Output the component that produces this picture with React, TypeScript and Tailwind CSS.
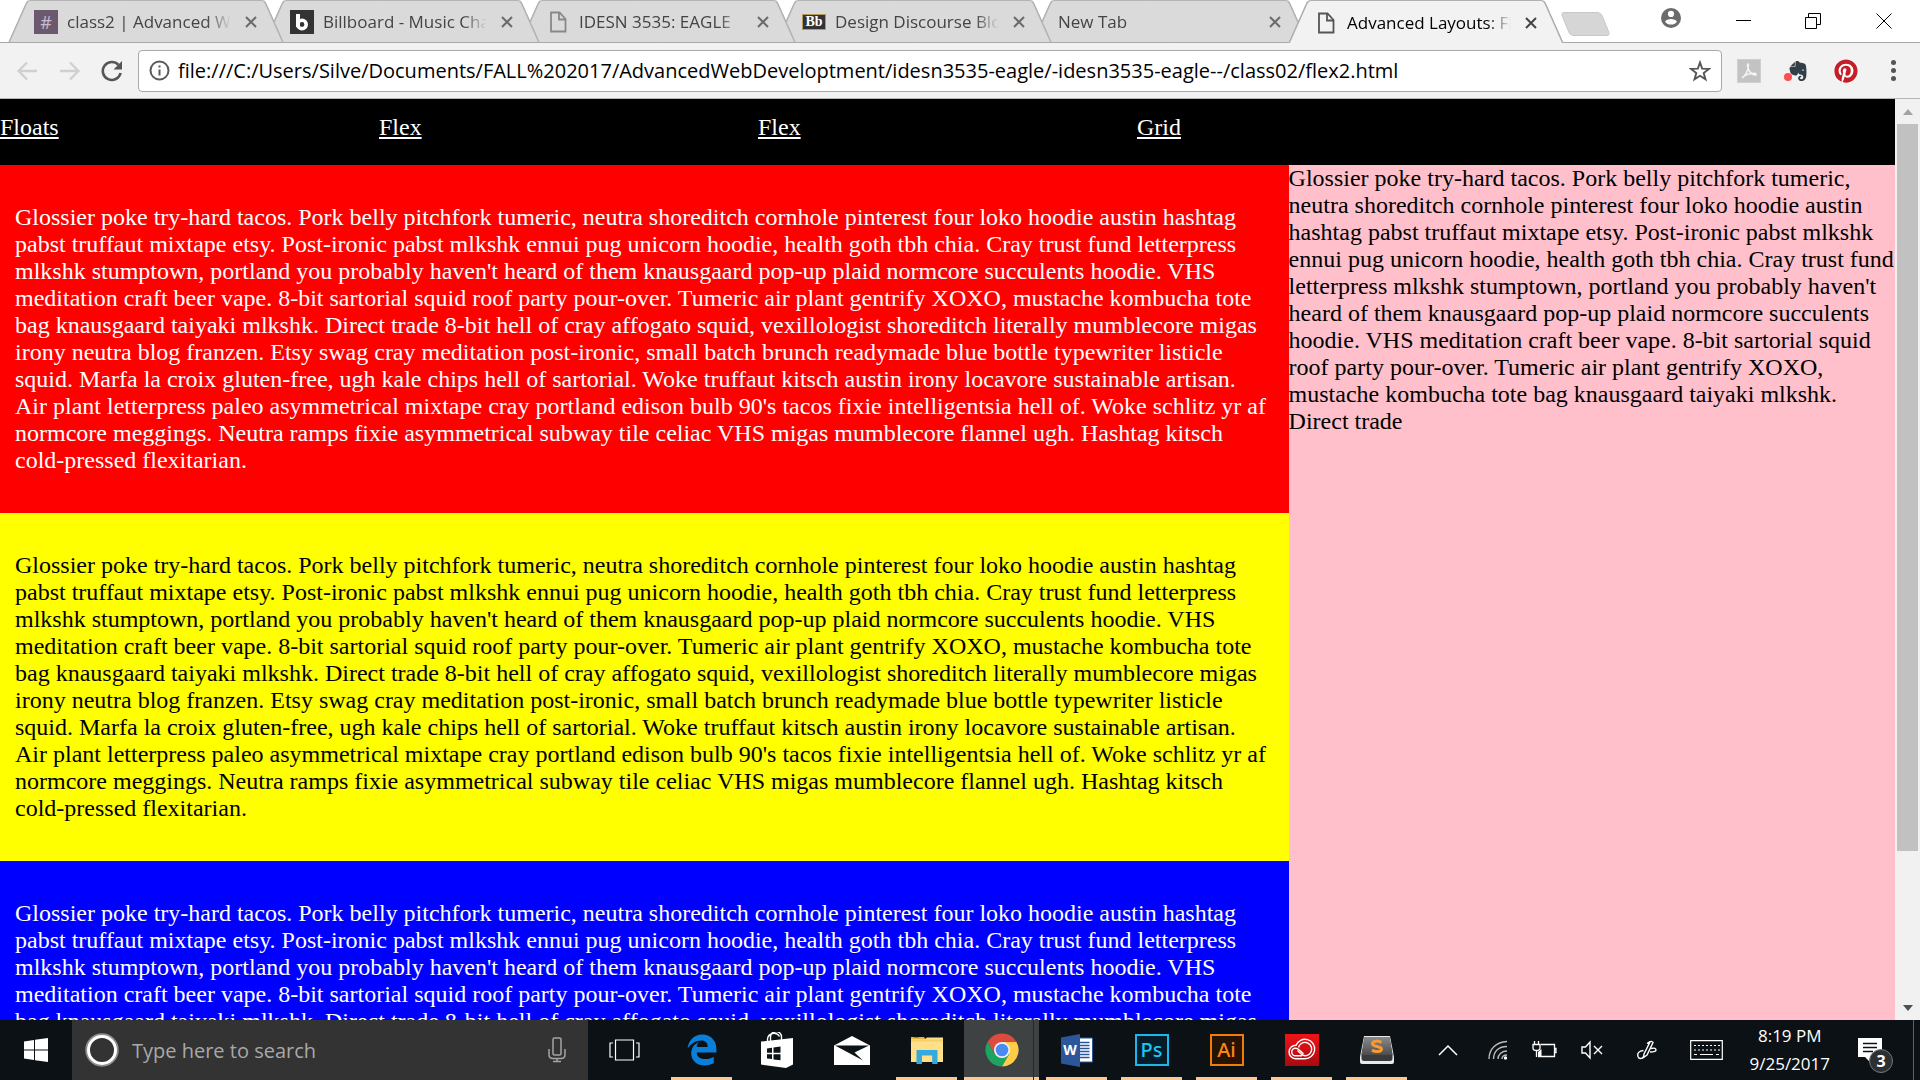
import React from "react";
import { FaEdgeLegacy, FaPinterest } from "react-icons/fa6";
import { SiEvernote } from "react-icons/si";

const LEAD =
  "Glossier poke try-hard tacos. Pork belly pitchfork tumeric, neutra shoreditch cornhole pinterest four loko hoodie austin hashtag pabst truffaut mixtape etsy. Post-ironic pabst mlkshk ennui pug unicorn hoodie, health goth tbh chia. Cray trust fund letterpress mlkshk stumptown, portland you probably haven't heard of them knausgaard pop-up plaid normcore succulents hoodie. VHS meditation craft beer vape. 8-bit sartorial squid roof party pour-over. Tumeric air plant gentrify XOXO, mustache kombucha tote bag knausgaard taiyaki mlkshk. Direct trade";

const BODY =
  LEAD +
  " 8-bit hell of cray affogato squid, vexillologist shoreditch literally mumblecore migas irony neutra blog franzen. Etsy swag cray meditation post-ironic, small batch brunch readymade blue bottle typewriter listicle squid. Marfa la croix gluten-free, ugh kale chips hell of sartorial. Woke truffaut kitsch austin irony locavore sustainable artisan. Air plant letterpress paleo asymmetrical mixtape cray portland edison bulb 90's tacos fixie intelligentsia hell of. Woke schlitz yr af normcore meggings. Neutra ramps fixie asymmetrical subway tile celiac VHS migas mumblecore flannel ugh. Hashtag kitsch cold-pressed flexitarian.";

/* ---------- Tab strip ---------- */

function PageIcon() {
  return (
    <svg width="24" height="24" viewBox="0 0 24 24" fill="none" stroke="currentColor" strokeWidth="1.8">
      <path d="M5 2.5h8.5L19.5 9v12.5H5z" />
      <path d="M13 2.5V9.5h6.5" />
    </svg>
  );
}

const slackIcon = (
  <span className="flex size-6 shrink-0 items-center justify-center bg-[#6b5a6e] text-lg leading-6 text-[#cbb9cd]">#</span>
);
const billboardIcon = (
  <svg width="24" height="24" viewBox="0 0 24 24" className="shrink-0">
    <rect width="24" height="24" fill="#333" />
    <path d="M8 4v13" stroke="#fff" strokeWidth="4" />
    <circle cx="12" cy="14.5" r="4.2" fill="none" stroke="#fff" strokeWidth="3.6" />
  </svg>
);
const bbIcon = (
  <span className="flex size-6 shrink-0 items-center justify-center">
    <span className="flex h-4 w-6 items-center justify-center border border-[#b39a5c] bg-[#333] font-['Liberation_Serif',serif] text-sm leading-4 font-bold text-white">
      Bb
    </span>
  </span>
);

type TabInfo = { title: string; icon?: React.ReactNode; z: string; active?: boolean };

const tabs: TabInfo[] = [
  { title: "class2 | Advanced Web", icon: slackIcon, z: "z-[5]" },
  { title: "Billboard - Music Charts", icon: billboardIcon, z: "z-[4]" },
  { title: "IDESN 3535: EAGLE", icon: <PageIcon />, z: "z-[3]" },
  { title: "Design Discourse Blog", icon: bbIcon, z: "z-[2]" },
  { title: "New Tab", z: "z-[1]" },
  { title: "Advanced Layouts: Flex", icon: <PageIcon />, z: "z-[6]", active: true },
];

function Tab({ tab }: { tab: TabInfo }) {
  const fill = tab.active
    ? "before:bg-[#f2f2f2] after:bg-[#f2f2f2] before:border-[#b0b0b0] after:border-[#b0b0b0] text-black"
    : "before:bg-[#dadada] after:bg-[#dadada] before:border-[#b4b4b4] after:border-[#b4b4b4] text-[#444]";
  return (
    <div
      className={`relative isolate -mr-5 flex w-[276px] shrink-0 items-center pt-0.5 pl-[26px] before:absolute before:inset-y-0 before:left-0 before:-z-10 before:w-1/2 before:origin-bottom-left before:skew-x-[-24deg] before:rounded-tl-sm before:border-t before:border-l-2 after:absolute after:inset-y-0 after:right-0 after:-z-10 after:w-1/2 after:origin-bottom-right after:skew-x-[24deg] after:rounded-tr-sm after:border-t after:border-r-2 ${tab.z} ${fill} ${tab.active ? "h-[43px]" : "h-[42px]"}`}
    >
      <button className="flex min-w-0 flex-1 items-center gap-[9px] text-left">
        {tab.icon && <span className={tab.active ? "shrink-0 text-[#555]" : "shrink-0 text-[#888]"}>{tab.icon}</span>}
        <span className="flex-1 overflow-hidden mask-r-from-[calc(100%-24px)] text-[17px] leading-6 whitespace-nowrap">
          {tab.title}
        </span>
      </button>
      <button aria-label="Close tab" className="mr-[25px] ml-3 flex size-4 items-center justify-center">
        <svg width="12" height="12" viewBox="0 0 12 12" stroke={tab.active ? "#444" : "#6b6b6b"} strokeWidth="2">
          <path d="M1 1l10 10M11 1L1 11" />
        </svg>
      </button>
    </div>
  );
}

function TabStrip() {
  return (
    <header className="flex h-[43px] shrink-0 border-b border-[#a8a8a8] bg-white pl-2">
      {tabs.map((t, i) => (
        <Tab key={i} tab={t} />
      ))}
      <button aria-label="New tab" className="mt-3 ml-[21px] h-6 w-[41px] skew-x-[22deg] rounded-sm border border-[#c8c8c8] bg-[#d6d6d6]" />
      <div className="ml-auto flex h-[42px] items-center">
        <button aria-label="Profile" className="mr-[26px] mb-1.5 flex w-6 justify-center">
          <svg width="20" height="20" viewBox="0 0 22 22">
            <circle cx="11" cy="11" r="11" fill="#6b6b6b" />
            <circle cx="11" cy="6.500" r="3.400" fill="#fff" />
            <path d="M4.500 15c1.500-3.800 11.500-3.800 13 0-2.800 4.200-10.200 4.200-13 0z" fill="#fff" />
          </svg>
        </button>
        <button aria-label="Minimize" className="flex w-[69px] justify-center">
          <svg width="16" height="16" stroke="#000"><path d="M0 7.500h15" /></svg>
        </button>
        <button aria-label="Restore" className="flex w-[69px] justify-center">
          <svg width="16" height="16" viewBox="0 0 16 16" fill="none" stroke="#000">
            <path d="M.5 4.500h11v11H.5zM3.500 4.500v-4h12v11h-4" />
          </svg>
        </button>
        <button aria-label="Close" className="flex w-[73px] justify-center">
          <svg width="16" height="16" stroke="#000"><path d="M.5.5l15 15M15.500.5l-15 15" /></svg>
        </button>
      </div>
    </header>
  );
}

/* ---------- Toolbar ---------- */

function Toolbar() {
  return (
    <div className="flex h-14 shrink-0 items-center border-b border-[#b6b4b6] bg-[#f2f2f2] pl-4">
      <button aria-label="Back" className="mr-[21px]">
        <svg width="22" height="22" viewBox="0 0 22 22" fill="none" stroke="#d0d0d0" strokeWidth="2.400">
          <path d="M21 11H3M11 2.500L2.500 11l8.500 8.500" />
        </svg>
      </button>
      <button aria-label="Forward" className="mr-5">
        <svg width="22" height="22" viewBox="0 0 22 22" fill="none" stroke="#d0d0d0" strokeWidth="2.400">
          <path d="M1 11h18M11 2.500l8.500 8.500-8.500 8.500" />
        </svg>
      </button>
      <button aria-label="Reload">
        <svg width="22" height="22" viewBox="0 0 22 22" fill="none" stroke="#555" strokeWidth="2.600">
          <path d="M19.600 13A9 9 0 1 1 17.400 4.800" />
          <path d="M21 1v8.500h-8.500z" fill="#555" stroke="none" />
        </svg>
      </button>
      <div className="ml-[15px] flex h-[42px] flex-1 items-center rounded border border-[#a9a9a9] bg-white px-2.5">
        <svg width="21" height="21" viewBox="0 0 21 21" fill="none" stroke="#5a5a5a" strokeWidth="2" className="shrink-0">
          <circle cx="10.500" cy="10.500" r="9" />
          <path d="M10.500 9.500v6M10.500 5.500v2" />
        </svg>
        <input
          aria-label="Address"
          className="ml-2 h-9 min-w-0 flex-1 text-xl text-black outline-none"
          defaultValue="file:///C:/Users/Silve/Documents/FALL%202017/AdvancedWebDeveloptment/idesn3535-eagle/-idesn3535-eagle--/class02/flex2.html"
        />
        <button aria-label="Bookmark">
          <svg width="22" height="22" viewBox="0 0 22 22" fill="none" stroke="#555" strokeWidth="1.900">
            <path d="M11 2.500l2.200 6.100 6.700.3-5.200 4.200 1.800 6.300L11 15.800l-5.500 3.600 1.800-6.300L2.100 8.900l6.700-.3z" />
          </svg>
        </button>
      </div>
      <div className="ml-[15px] flex items-center">
        <button aria-label="Adobe Acrobat" className="mr-[27px]">
          <svg width="24" height="24" viewBox="0 0 24 24">
            <rect x=".5" y=".5" width="23" height="23" fill="#c3c3c3" stroke="#cfcfcf" />
            <path d="M5 19c3-1.500 6.500-8 6.500-13 0-2-1.500-1-.8 2 1.200 4.500 4 7.500 7.300 8 2 0 1.500-2-1.500-1.800-4 .3-7.500 1.300-10.500 3.300" fill="none" stroke="#f4f4f4" strokeWidth="1.500" />
          </svg>
        </button>
        <button aria-label="Evernote" className="relative mr-[26px]">
          <SiEvernote size={20} color="#333f48" />
          <span className="absolute bottom-0 -left-1 size-2 rounded-full bg-[#fc4f4f]" />
        </button>
        <button aria-label="Pinterest" className="mr-[33px] rounded-full bg-white">
          <FaPinterest size={24} color="#c41f28" />
        </button>
        <button aria-label="Menu" className="mr-6 flex flex-col gap-[3px]">
          <span className="size-[5px] rounded-full bg-[#555]" />
          <span className="size-[5px] rounded-full bg-[#555]" />
          <span className="size-[5px] rounded-full bg-[#555]" />
        </button>
      </div>
    </div>
  );
}

/* ---------- Web page ---------- */

function WebPage() {
  return (
    <div className="flex min-h-0 flex-1">
      <div className="flex min-w-0 flex-1 flex-col overflow-hidden font-['Liberation_Serif',serif] text-2xl leading-[27px] text-black">
        <nav className="flex shrink-0 bg-black pt-[15px] pb-6 text-white">
          {["Floats", "Flex", "Flex", "Grid"].map((label, i) => (
            <div key={i} className="w-1/5">
              <a href="#" className="underline">{label}</a>
            </div>
          ))}
        </nav>
        <div className="flex min-h-0 flex-1">
          <main className="w-[68%]">
            <section className="bg-[#ff0000] py-[39px] pr-[18px] pl-[15px] text-white"><p>{BODY}</p></section>
            <section className="bg-[#ffff00] py-[39px] pr-[18px] pl-[15px]"><p>{BODY}</p></section>
            <section className="bg-[#0000ff] py-[39px] pr-[18px] pl-[15px] text-white"><p>{BODY}</p></section>
          </main>
          <aside className="w-[32%] bg-[#ffc0cb]">{LEAD}</aside>
        </div>
      </div>
      <div className="flex w-[25px] shrink-0 flex-col bg-[#f1f1f1]">
        <button aria-label="Scroll up" className="flex h-[25px] items-center justify-center">
          <svg width="10" height="6"><path d="M0 6l5-6 5 6z" fill="#a3a3a3" /></svg>
        </button>
        <div className="flex-1 px-0.5">
          <div className="h-[83.5%] bg-[#c1c1c1]" />
        </div>
        <button aria-label="Scroll down" className="flex h-[25px] items-center justify-center">
          <svg width="10" height="6"><path d="M0 0l5 6 5-6z" fill="#505050" /></svg>
        </button>
      </div>
    </div>
  );
}

/* ---------- Taskbar ---------- */

const storeIcon = (
  <svg width="32" height="36" viewBox="0 0 32 36">
    <path d="M0 9.500L32 6v26.500L25 36 0 32.500z" fill="#fff" />
    <path d="M6.500 10V7a6.500 6.500 0 0 1 12-2.500M9.500 9V5a5.500 5.500 0 0 1 11 0v3" fill="none" stroke="#fff" strokeWidth="1.400" />
    <path d="M6 16.500l5-.7v5H6zM12.500 15.500l7-1v6.300h-7zM6 22.300h5v4.800l-5-.6zM12.500 22.300h7v6l-7-.9z" fill="#0c1417" />
  </svg>
);
const mailIcon = (
  <svg width="36" height="29" viewBox="0 0 36 29">
    <path d="M0 9.500L18 0l18 9.500V29H0z" fill="#fff" />
    <path d="M1 9.500h34L20.500 16.500 29 24.500 1 9.500z" fill="#0c1417" />
  </svg>
);
const explorerIcon = (
  <svg width="32" height="28" viewBox="0 0 32 28">
    <path d="M0 1h13l2 3H0z" fill="#e8b53c" />
    <path d="M0 3h14l2-1.500h16V26H0z" fill="#ffe08a" />
    <path d="M0 3.500h32v2H0z" fill="#f7cf67" />
    <path d="M3 1.500h5" stroke="#3fae5a" strokeWidth="1" />
    <path d="M5.500 28V14h21v14h-5.300v-8.500H11V28z" fill="#34a9dc" />
  </svg>
);
const chromeIcon = (
  <svg width="34" height="34" viewBox="0 0 34 34">
    <path d="M2.700 8.750A16.500 16.500 0 0 0 17 33.500l7.200-12.400L17 17 9.900 21.100z" fill="#1da362" />
    <path d="M31.300 8.750H17L24.200 21.100 17 33.500A16.500 16.500 0 0 0 31.300 8.750z" fill="#ffcd46" />
    <path d="M17 8.750h14.300A16.500 16.500 0 0 0 2.700 8.750L9.900 21.100z" fill="#dd4b3e" />
    <circle cx="17" cy="17" r="8" fill="#f1f1f1" />
    <circle cx="17" cy="17" r="6.300" fill="#4a8af4" />
  </svg>
);
const wordIcon = (
  <span className="relative flex">
    <svg width="32" height="33" viewBox="0 0 32 33">
      <path d="M17 4h14.500v24H17z" fill="#fff" stroke="#2b579a" />
      <path d="M19 8.500h9.500M19 11.500h9.500M19 14.500h9.500M19 17.500h9.500M19 20.500h9.500M19 23.500h9.500" stroke="#2b579a" strokeWidth="1.400" />
      <path d="M0 3.500L19 0v33L0 29.500z" fill="#2b579a" />
    </svg>
    <span className="absolute inset-y-0 left-0 flex w-[19px] items-center justify-center text-sm leading-4 font-bold text-white">W</span>
  </span>
);
const psIcon = (
  <span className="flex h-8 w-[34px] items-center justify-center border-2 border-[#1bb8ee] bg-[#061c28] font-['Noto_Sans',sans-serif] text-xl leading-6 font-medium text-[#1bc5f5]">Ps</span>
);
const aiIcon = (
  <span className="flex h-8 w-[34px] items-center justify-center border-2 border-[#f07c0a] bg-[#271303] font-['Noto_Sans',sans-serif] text-xl leading-6 font-medium text-[#f98513]">Ai</span>
);
const ccIcon = (
  <svg width="34" height="32" viewBox="0 0 34 32">
    <defs>
      <linearGradient id="cc" x1="0" y1="0" x2="0" y2="1">
        <stop offset="0" stopColor="#f01418" />
        <stop offset="1" stopColor="#a80a10" />
      </linearGradient>
    </defs>
    <rect width="34" height="32" fill="url(#cc)" />
    <g fill="none" stroke="#fff" strokeWidth="1.400">
      <path d="M10.500 24.700H20a9.700 9.700 0 1 0-9-13.400 6.700 6.700 0 0 0-.5 13.400z" />
      <path d="M17 21.800h-6.500a3.800 3.800 0 0 1 0-7.600q2 0 3.500 1.500l4.500 4" />
      <path d="M13.500 13.500a6.700 6.700 0 1 1 6.500 8.300q-2 0-4-2l-3.500-3.300" />
    </g>
  </svg>
);
const sublimeIcon = (
  <svg width="34" height="30" viewBox="0 0 34 30">
    <defs>
      <linearGradient id="sb" x1="0" y1="0" x2="0" y2="1">
        <stop offset="0" stopColor="#8a8a8a" />
        <stop offset="1" stopColor="#4c4c4c" />
      </linearGradient>
    </defs>
    <path d="M4 1h26l4 21v5q0 2-2 2H2q-2 0-2-2v-5z" fill="#e8e8e8" />
    <path d="M4.500 2h25l3 17.500V23q0 3-2.500 3H4q-2.500 0-2.500-3v-3.500z" fill="#3a3a3a" />
    <path d="M4.500 2h25l3 18h-31z" fill="url(#sb)" />
    <path d="M21.500 7.500c-3-2-9-2-9 1.300s9 2 9 5.200-6.500 3.300-9.500 1" fill="none" stroke="#f79a35" strokeWidth="3" />
  </svg>
);

type AppInfo = { name: string; icon: React.ReactNode; running?: boolean; active?: boolean };

const apps: AppInfo[] = [
  { name: "Microsoft Edge", icon: <FaEdgeLegacy size={32} color="#0a7fd9" />, running: true },
  { name: "Store", icon: storeIcon },
  { name: "Mail", icon: mailIcon },
  { name: "File Explorer", icon: explorerIcon, running: true },
  { name: "Google Chrome", icon: chromeIcon, running: true, active: true },
  { name: "Word", icon: wordIcon, running: true },
  { name: "Photoshop", icon: psIcon, running: true },
  { name: "Illustrator", icon: aiIcon, running: true },
  { name: "Creative Cloud", icon: ccIcon, running: true },
  { name: "Sublime Text", icon: sublimeIcon, running: true },
];

function Taskbar() {
  return (
    <footer className="flex h-[60px] shrink-0 bg-[#0b1114] text-white">
      <button aria-label="Start" className="flex w-[72px] items-center justify-center">
        <svg width="24" height="24" viewBox="0 0 24 24" fill="#fff">
          <path d="M0 3.400L10 2v9.500H0zM11 1.800L24 0v11.500H11zM0 12.500h10V22L0 20.600zM11 12.500h13V24l-13-1.800z" />
        </svg>
      </button>
      <div className="flex w-[516px] items-center bg-[#333] pr-[22px] pl-[13px]">
        <svg width="34" height="34" viewBox="0 0 34 34" fill="none" className="shrink-0">
          <circle cx="17" cy="17" r="15.500" stroke="#8f8f8f" strokeWidth="2.500" />
          <circle cx="17" cy="17" r="13.500" stroke="#fff" strokeWidth="3" />
        </svg>
        <input
          aria-label="Search"
          placeholder="Type here to search"
          className="ml-[13px] min-w-0 flex-1 pt-0.5 text-[20px] outline-none placeholder:text-[#a8a8a8]"
        />
        <button aria-label="Voice search">
          <svg width="18" height="26" viewBox="0 0 18 26" fill="none" stroke="#a5a5a5" strokeWidth="1.500">
            <rect x="5" y="1" width="8" height="17" rx="1.500" />
            <path d="M1 12v5.500q0 4 4 4h8q4 0 4-4V12M9 21.500v3M5 24.500h8" />
          </svg>
        </button>
      </div>
      <button aria-label="Task view" className="flex w-[76px] items-center justify-center pr-1">
        <svg width="31" height="22" viewBox="0 0 31 22" fill="none" stroke="#fff" strokeWidth="1.200">
          <path d="M6.500 1h18v20h-18zM4 4H1v14h3M27 4h3v14h-3" />
        </svg>
      </button>
      {apps.map((a) => (
        <button
          key={a.name}
          aria-label={a.name}
          className={`relative flex w-[75px] items-center justify-center ${a.active ? "bg-[#3f4243]" : ""}`}
        >
          {a.icon}
          {a.running && (
            <span className={`absolute bottom-0 h-[3px] bg-[#fdc78d] ${a.active ? "inset-x-0" : "inset-x-[7px]"}`} />
          )}
          {a.active && <span className="absolute inset-y-0 right-[5px] w-px bg-[#26292b]" />}
        </button>
      ))}
      <div className="ml-auto flex items-center">
        <button aria-label="Show hidden icons" className="mr-[30px]">
          <svg width="20" height="12" viewBox="0 0 20 12" fill="none" stroke="#fff" strokeWidth="1.500"><path d="M1 11l9-9 9 9" /></svg>
        </button>
        <button aria-label="Network" className="mr-6">
          <svg width="20" height="20" viewBox="0 0 20 20" fill="none" stroke="#bbb" strokeWidth="1.400">
            <path d="M1 19C1 9 8 2 19 1.500M5.500 19C5.500 11 11 6.500 19 6.500M10 19c0-4.500 4-8 9-8M14 19c0-2.500 2-4 5-4" />
            <circle cx="17.500" cy="18" r="1.700" fill="#fff" stroke="none" />
          </svg>
        </button>
        <button aria-label="Battery" className="mr-6">
          <svg width="25" height="20" viewBox="0 0 25 20" fill="none" stroke="#fff" strokeWidth="1.300">
            <path d="M9 4.500h13.500v12H6M22.500 8.500H24v4h-1.500" />
            <path d="M1 4.500h7V8q0 2.500-3.500 2.500T1 8zM2.500 4.500V1M6.500 4.500V1M4.500 10.500V17" />
            <path d="M6 16v-4l3.500-3v7z" fill="#fff" stroke="none" />
          </svg>
        </button>
        <button aria-label="Volume muted" className="mr-[34px]">
          <svg width="22" height="20" viewBox="0 0 22 20" fill="none" stroke="#fff" strokeWidth="1.400">
            <path d="M1 7h3.500l4.500-5v16l-4.500-5H1zM13 6l8 8M21 6l-8 8" />
          </svg>
        </button>
        <button aria-label="Windows Ink" className="mr-[33px]">
          <svg width="20" height="20" viewBox="0 0 20 20" fill="none" stroke="#fff" strokeWidth="1.400">
            <path d="M7 14L13 2q1.500-1.500 3 .5L10 15l-3.500 2.500zM6.500 10.500C2 11 0 13 1 16.500c1 3 4.500 2.500 5.500 0M10 3.500l3-2M14 8.500c4-1 5 0 5 1.500s-2 2-6 2" />
          </svg>
        </button>
        <button aria-label="Touch keyboard" className="mr-[26px]">
          <svg width="33" height="20" viewBox="0 0 33 20" fill="none" stroke="#fff" strokeWidth="1.200">
            <path d="M.7.7h31.600v18.600H.7z" />
            <path d="M4 5.500h26M4 10h26" strokeDasharray="2 2" />
            <path d="M4 14.500h3M10 14.500h13M26 14.500h3" />
          </svg>
        </button>
        <button className="mr-7 text-center text-[17px] leading-7">
          <span className="block">8:19 PM</span>
          <span className="block">9/25/2017</span>
        </button>
        <button aria-label="Notifications" className="relative mr-[31px]">
          <svg width="24" height="25" viewBox="0 0 24 25">
            <path d="M0 0h24v19H13v6l-6-6H0z" fill="#fff" />
            <path d="M5 5.500h14M5 9.500h14M5 13.500h10" stroke="#0b1114" strokeWidth="1.400" />
          </svg>
          <span className="absolute top-[11px] left-[11px] flex size-6 items-center justify-center rounded-full border border-[#777] bg-[#2c3033] text-base font-bold">
            3
          </span>
        </button>
        <div className="mr-1.5 h-[60px] w-px bg-[#5d6466]" />
      </div>
    </footer>
  );
}

export default function App() {
  return (
    <div className="flex h-screen flex-col overflow-hidden bg-white font-['Open_Sans','Noto_Sans',sans-serif]">
      <TabStrip />
      <Toolbar />
      <WebPage />
      <Taskbar />
    </div>
  );
}
